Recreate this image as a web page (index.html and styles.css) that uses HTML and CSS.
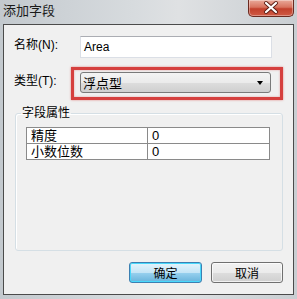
FILE: index.html
```html
<!DOCTYPE html>
<html lang="zh-CN">
<head>
    <meta charset="UTF-8">
    <title>添加字段</title>
    <link rel="stylesheet" href="styles.css">
</head>
<body>
    <div class="window">
        <div class="titlebar">
            <span class="title">添加字段</span>
            <div class="close-btn">
                <svg width="46" height="17" viewBox="0 0 46 17">
                    <path d="M18 4 L28 13 M28 4 L18 13" stroke="#5a1d14" stroke-width="4" stroke-linecap="round"/>
                    <path d="M18 4 L28 13 M28 4 L18 13" stroke="#ffffff" stroke-width="2.2" stroke-linecap="round"/>
                </svg>
            </div>
        </div>

        <div class="client">
            <div class="field-row">
                <label class="field-label">名称(N):</label>
                <div class="textbox">Area</div>
            </div>

            <div class="field-row type-row">
                <label class="field-label">类型(T):</label>
                <div class="combo">
                    <span>浮点型</span>
                    <span class="arrow"></span>
                </div>
                <div class="mark"></div>
            </div>

            <fieldset class="group">
                <legend>字段属性</legend>
                <table class="props">
                    <tr><td class="key">精度</td><td>0</td></tr>
                    <tr><td class="key">小数位数</td><td>0</td></tr>
                </table>
            </fieldset>

            <div class="buttons">
                <button class="btn btn-default">确定</button>
                <button class="btn btn-cancel">取消</button>
            </div>
        </div>
    </div>
</body>
</html>
```

FILE: styles.css
```css
body {
    margin: 0;
    font-family: "Liberation Sans", "Noto Sans CJK SC", sans-serif;
    font-size: 12px;
    color: #000;
    background: #cfd3d6;
}
.window {
    width: 297px;
    height: 299px;
    background: linear-gradient(90deg, #c3c9ce 0%, #d7dbde 45%, #dfe1e3 60%, #c9ced2 100%);
}
.titlebar {
    height: 24px;
    display: flex;
    justify-content: space-between;
    padding: 0 3px;
}
.title {
    padding-top: 3px;
    font-size: 13px;
    line-height: 15px;
    color: #1a1a1a;
}
.close-btn {
    width: 46px;
    height: 17px;
    box-sizing: border-box;
    border: 1px solid #6b2a20;
    border-top: none;
    border-radius: 0 0 5px 5px;
    background: linear-gradient(#e9a99a 0%, #d8735f 45%, #c2402c 55%, #cf5a44 100%);
    box-shadow: inset 0 0 0 1px rgba(255, 255, 255, 0.35);
}
.close-btn svg {
    display: block;
    margin: -1px 0 0 -1px;
}
.client {
    margin: 0 3px;
    height: 271px;
    box-sizing: border-box;
    border: 1px solid #4b4b4b;
    background: #f0f0f0;
    display: flex;
    flex-direction: column;
    padding: 11px 10px 11px 10px;
}
.field-row {
    display: flex;
    align-items: flex-start;
}
.field-label {
    width: 66px;
    margin-top: 2px;
    line-height: 14px;
}
.textbox {
    width: 192px;
    height: 22px;
    box-sizing: border-box;
    border: 1px solid #dbdfe6;
    border-top-color: #abadb3;
    background: #fff;
    padding: 0 3px;
    line-height: 20px;
}
.type-row {
    position: relative;
    margin-top: 14px;
}
.combo {
    width: 191px;
    height: 21px;
    box-sizing: border-box;
    border: 1px solid #7a7a7a;
    border-radius: 3px;
    background: linear-gradient(#f4f4f4 0%, #ebebeb 50%, #dddddd 51%, #cfcfcf 100%);
    display: flex;
    justify-content: space-between;
    align-items: center;
    padding: 0 7px 0 2px;
    font-size: 13px;
}
.arrow {
    width: 0;
    height: 0;
    border-left: 3.5px solid transparent;
    border-right: 3.5px solid transparent;
    border-top: 4px solid #000;
}
.mark {
    position: absolute;
    left: 57px;
    top: -5px;
    width: 212px;
    height: 33px;
    box-sizing: border-box;
    border: 3px solid #d5403e;
    box-shadow: 0 0 2px rgba(213, 64, 62, 0.6), inset 0 0 2px rgba(213, 64, 62, 0.5);
}
.group {
    flex: 1;
    margin: 13px 0 0 1px;
    padding: 7px 12px 0 10px;
    border: 1px solid #d5dfe5;
    border-radius: 3px;
    box-shadow: inset 1px 1px 0 #fff;
    min-width: 0;
}
.group legend {
    margin-left: -5px;
    padding: 0 1px;
    line-height: 14px;
}
.props {
    width: 244px;
    border-collapse: collapse;
    background: #fff;
    font-size: 13px;
}
.props td {
    border: 1px solid #8a8a8a;
    height: 15px;
    padding: 0 4px;
    line-height: 15px;
}
.props td.key {
    width: 112px;
}
.buttons {
    display: flex;
    justify-content: flex-end;
    gap: 9px;
    margin-top: 11px;
}
.btn {
    height: 21px;
    box-sizing: border-box;
    border: 1px solid #707070;
    border-radius: 3px;
    background: linear-gradient(#f2f2f2 0%, #ebebeb 50%, #dddddd 51%, #cfcfcf 100%);
    box-shadow: inset 0 0 0 1px rgba(255, 255, 255, 0.7);
    font-family: "Liberation Sans", "Noto Sans CJK SC", sans-serif;
    font-size: 12px;
    padding: 0;
    color: #000;
}
.btn-default {
    width: 73px;
    border-color: #3c7fb1;
    background: linear-gradient(#e5f4fc 0%, #c4e5f6 50%, #98d1ef 51%, #68b3db 100%);
    box-shadow: inset 0 0 0 1px #48d8fb;
}
.btn-cancel {
    width: 72px;
}
```
